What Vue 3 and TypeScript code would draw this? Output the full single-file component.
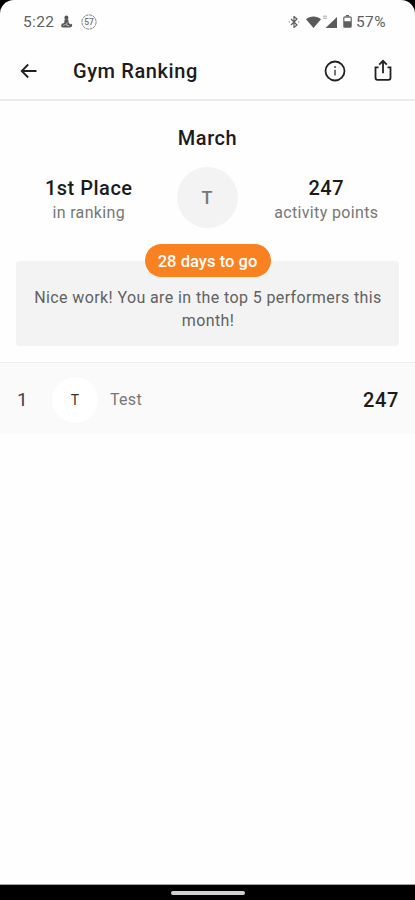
<script setup lang="ts">
interface RankingEntry {
  rank: number
  initial: string
  name: string
  points: number
}

const entries: RankingEntry[] = [{ rank: 1, initial: 'T', name: 'Test', points: 247 }]
</script>

<template>
  <div class="device">
    <main class="screen">
      <div class="status">
        <span class="time">5:22</span>
        <svg class="person" width="14" height="14" viewBox="0 0 14 14">
          <ellipse cx="6.4" cy="2.8" rx="2" ry="2.3" />
          <path d="M4.6 4.5h3.7l.4 3.6 2 1.5 1.4-1v2.6l-2 1.2H2.6L1 11.2l.8-2.4 2.4-.8z" />
          <path class="cut" d="M3 10.6l2.7-1.2M7 7.5l-.4 2.7 2.7.8" />
        </svg>
        <svg class="speed" width="16" height="16" viewBox="0 0 16 16">
          <circle cx="8" cy="8" r="7.1" />
          <text x="8" y="11">57</text>
        </svg>
        <span class="fill"></span>
        <svg class="bluetooth" width="12" height="12" viewBox="0 0 12 12">
          <path d="M3 3l6 6-3 2.5V.5L9 3 3 9" />
          <path d="M.8 6h1M10.2 6h1" />
        </svg>
        <svg class="wifi" width="15" height="12" viewBox="0 0 15 12">
          <path d="M0 3.3C4.2-.5 10.8-.5 15 3.3L7.5 12z" />
        </svg>
        <svg class="signal" width="14" height="14" viewBox="0 0 14 14">
          <path d="M14 2v11H2.5z" />
          <path class="small" d="M0 1.2h4M0 3.2h4" />
        </svg>
        <svg class="battery" width="9" height="13" viewBox="0 0 9 13">
          <path d="M3 0h3v1.5H3z" />
          <rect class="case" x=".8" y="2" width="7.4" height="10.2" rx="1" />
          <path d="M1 6.2h7v6H1z" />
        </svg>
        <span class="percent">57%</span>
      </div>

      <header class="bar">
        <svg class="back" width="18" height="16" viewBox="0 0 18 16">
          <path d="M16.5 8H2M8.2 1.5L1.7 8l6.5 6.5" />
        </svg>
        <h1>Gym Ranking</h1>
        <svg class="info" width="22" height="22" viewBox="0 0 22 22">
          <circle cx="11" cy="11" r="9.5" />
          <path class="mark" d="M11 9.8v5.8M11 6v2" />
        </svg>
        <svg class="share" width="18" height="23" viewBox="0 0 18 23">
          <path d="M4.5 8.3H1.5v10.5a2 2 0 002 2h11a2 2 0 002-2V8.3h-3M9 14.3V2M5.2 5.7L9 1.8l3.8 3.9" />
        </svg>
      </header>

      <section class="summary">
        <h2>March</h2>
        <div class="stats">
          <div class="stat">
            <strong>1st Place</strong>
            <span>in ranking</span>
          </div>
          <div class="avatar">T</div>
          <div class="stat">
            <strong>247</strong>
            <span>activity points</span>
          </div>
        </div>
        <div class="notice">
          <span class="pill">28 days to go</span>
          <p>Nice work! You are in the top 5 performers this month!</p>
        </div>
      </section>

      <ul class="list">
        <li v-for="entry in entries" :key="entry.rank">
          <span class="rank">{{ entry.rank }}</span>
          <span class="initial">{{ entry.initial }}</span>
          <span class="name">{{ entry.name }}</span>
          <span class="points">{{ entry.points }}</span>
        </li>
      </ul>
    </main>
    <footer class="nav"><span class="handle"></span></footer>
  </div>
</template>

<style>
body {
  background: #000;
}
</style>

<style scoped>
.device {
  display: flex;
  flex-direction: column;
  width: 415px;
  height: 900px;
  background: #000;
  font-family: Roboto, "Liberation Sans", sans-serif;
  color: #1c1c1c;
}
.device * {
  box-sizing: border-box;
}
svg {
  display: block;
  flex: none;
}
.screen {
  flex: 1;
  background: #fefefe;
  border-radius: 14px 14px 0 0;
  border-bottom: 1px solid #a0a4a2;
  overflow: hidden;
}
.status {
  display: flex;
  align-items: center;
  height: 43px;
  padding: 0 29px 0 23px;
  color: #606060;
  font-size: 15.5px;
}
.time {
  width: 37px;
  letter-spacing: 0.35px;
}
.fill {
  flex: 1;
}
.person {
  fill: #555;
}
.person .cut {
  fill: none;
  stroke: #ddd;
  stroke-width: 0.8;
}
.speed {
  margin-left: 7px;
}
.speed circle {
  fill: none;
  stroke: #808080;
  stroke-width: 1;
  stroke-dasharray: 3 0.7;
}
.speed text {
  font-size: 8.5px;
  font-weight: 500;
  text-anchor: middle;
  fill: #707070;
}
.bluetooth {
  fill: none;
  stroke: #606060;
  stroke-width: 1.2;
}
.wifi {
  margin-left: 6px;
  fill: #5a5a5a;
}
.signal {
  margin-left: 2px;
  fill: #5a5a5a;
}
.signal .small {
  stroke: #aaa;
  stroke-width: 1;
}
.battery {
  margin-left: 6px;
  fill: #606060;
}
.battery .case {
  fill: none;
  stroke: #707070;
  stroke-width: 1.3;
}
.percent {
  width: 30px;
  margin-left: 4px;
  font-size: 15.5px;
  letter-spacing: 0.4px;
  white-space: nowrap;
}
.bar {
  display: flex;
  align-items: center;
  height: 58px;
  padding: 0 23px 1px 20px;
  border-bottom: 2px solid #ebebeb;
}
.bar svg {
  fill: none;
  stroke: #202020;
  stroke-width: 1.8;
}
.bar .mark {
  stroke: #666;
}
h1 {
  flex: 1;
  margin: 1px 0 0 35px;
  font-size: 20px;
  font-weight: 480;
  line-height: 24px;
  letter-spacing: 0.6px;
}
.share {
  margin-left: 28px;
}
.summary {
  display: flex;
  flex-direction: column;
  height: 261px;
  padding: 25px 16px 16px;
}
h2 {
  margin: 0;
  font-size: 20px;
  font-weight: 500;
  line-height: 24px;
  letter-spacing: 0.55px;
  text-align: center;
}
.stats {
  display: flex;
  align-items: center;
  height: 61px;
  margin-top: 17px;
}
.stat {
  flex: 1;
  display: flex;
  flex-direction: column;
  align-items: center;
  padding-top: 5px;
}
.stat:first-child {
  padding-right: 15px;
}
.stat:last-child {
  padding-left: 16px;
}
.stat strong {
  font-size: 20px;
  font-weight: 500;
  line-height: 25px;
  letter-spacing: 0.5px;
}
.stat span {
  font-size: 16px;
  line-height: 24px;
  letter-spacing: 0.35px;
  color: #777;
}
.avatar {
  display: flex;
  align-items: center;
  justify-content: center;
  width: 61px;
  height: 61px;
  border-radius: 50%;
  background: #f3f3f3;
  color: #777;
  font-size: 18px;
  font-weight: 500;
}
.notice {
  display: flex;
  flex-direction: column;
  align-items: center;
  height: 85px;
  margin-top: 33px;
  border-radius: 3px;
  background: #f3f3f3;
}
.pill {
  flex: none;
  width: 126px;
  height: 33px;
  margin-top: -17px;
  border-radius: 17px;
  background: #f98120;
  color: #fff;
  font-size: 16.5px;
  font-weight: 500;
  line-height: 36px;
  letter-spacing: 0.05px;
  text-align: center;
  white-space: nowrap;
}
p {
  margin: 9px 0 0;
  padding: 0 11px 0 12px;
  font-size: 16px;
  line-height: 23px;
  letter-spacing: 0.39px;
  color: #616161;
  text-align: center;
}
.list {
  margin: 0;
  padding: 0;
  list-style: none;
}
.list li {
  display: flex;
  align-items: center;
  height: 72px;
  padding: 2px 16px 0 17px;
  border-top: 1px solid #eee;
  background: #fafafa;
}
.rank {
  width: 35px;
  font-size: 19px;
  color: #444;
}
.initial {
  display: flex;
  align-items: center;
  justify-content: center;
  width: 46px;
  height: 46px;
  border-radius: 50%;
  background: #fff;
  font-size: 14px;
  color: #333;
}
.name {
  flex: 1;
  margin-left: 12px;
  font-size: 16px;
  letter-spacing: 0.3px;
  color: #777;
}
.points {
  font-size: 20px;
  font-weight: 500;
  letter-spacing: 0.6px;
}
.nav {
  display: flex;
  justify-content: center;
  height: 15px;
  padding-top: 6px;
}
.handle {
  width: 74px;
  height: 4px;
  border-radius: 2px;
  background: #d0d0d0;
}
</style>
